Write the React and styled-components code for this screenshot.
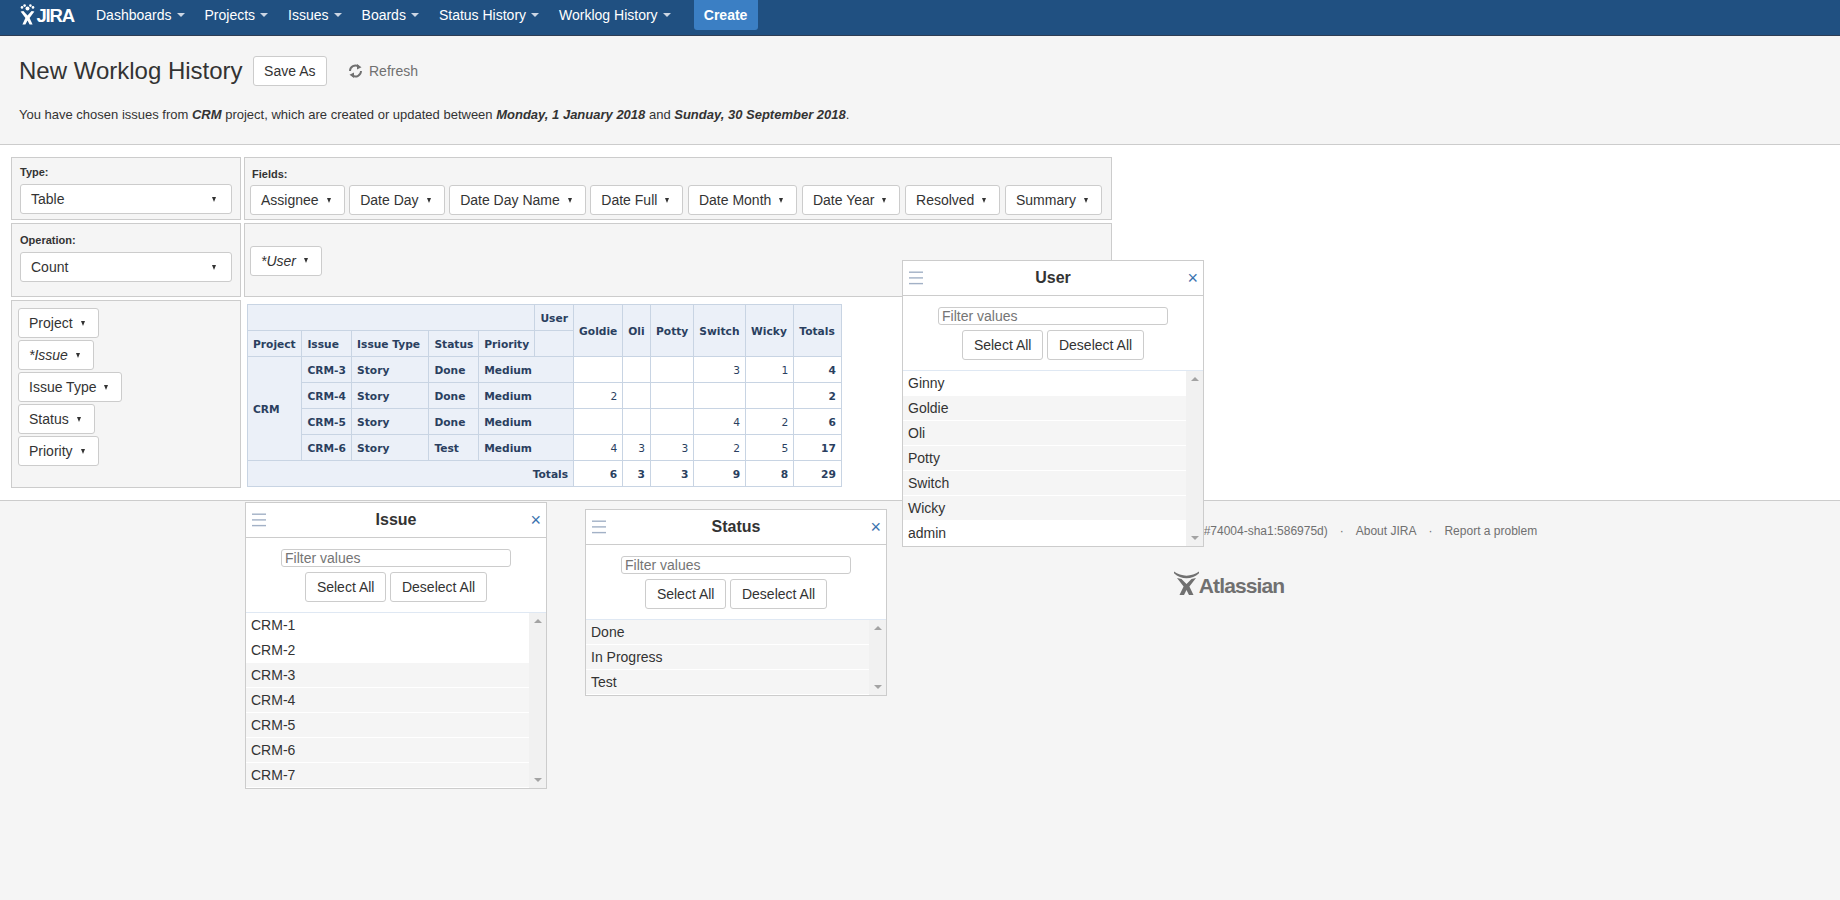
import React from "react";
import styled, { createGlobalStyle } from "styled-components";

const Global = createGlobalStyle`
  html, body { margin: 0; padding: 0; background: #fff; }
  * { box-sizing: border-box; }
  body { font-family: "Liberation Sans", Arial, sans-serif; font-size: 14px; color: #333; }
`;

const Page = styled.div`
  position: relative;
  display: flex;
  flex-direction: column;
  min-height: 100vh;
  overflow: hidden;
`;

const Header = styled.header`
  display: flex;
  align-items: flex-start;
  height: 36px;
  padding-left: 20px;
  background: #205081;
  border-bottom: 1px solid #2e3d54;
`;

const Logo = styled.div`
  display: flex;
  align-items: flex-start;
  width: 76px;
  height: 35px;
  color: #fff;
  svg { margin-top: 4px; flex: none; }
`;

const LogoText = styled.span`
  font-size: 18.5px;
  font-weight: 700;
  letter-spacing: -1.2px;
  line-height: 20px;
  margin: 6px 0 0 1.5px;
`;

const NavItem = styled.a`
  display: flex;
  align-items: center;
  height: 30px;
  padding-right: 20px;
  color: #fff;
  font-size: 14px;
`;

const NavCaret = styled.i`
  width: 0;
  height: 0;
  margin-left: 5px;
  border-left: 4px solid transparent;
  border-right: 4px solid transparent;
  border-top: 4px solid #ccd6e4;
`;

const Create = styled.button`
  width: 64px;
  height: 30px;
  margin-left: 3px;
  padding: 0;
  border: 0;
  border-radius: 0 0 3px 3px;
  background: #3b7fc4;
  color: #fff;
  font: 700 14px "Liberation Sans", Arial, sans-serif;
`;

const PageHeader = styled.section`
  height: 109px;
  padding: 20px 19px 0;
  background: #f5f5f5;
  border-bottom: 1px solid #ccc;
`;

const TitleRow = styled.div`
  display: flex;
  align-items: center;
  height: 30px;
`;

const Title = styled.h1`
  margin: 0 10px 0 0;
  font-size: 24px;
  font-weight: 400;
  color: #333;
`;

const Btn = styled.button`
  display: inline-flex;
  align-items: center;
  justify-content: center;
  flex: none;
  height: 30px;
  padding: 0 ${(p) => p.$right ?? 10.5}px 0 ${(p) => p.$left ?? 10.5}px;
  background: #fff;
  border: 1px solid #ccc;
  border-radius: 3px;
  color: #333;
  font: ${(p) => (p.$italic ? "italic " : "")}400 14px "Liberation Sans", Arial, sans-serif;
  white-space: nowrap;
`;

const FieldBtn = styled(Btn).attrs({ $left: 10, $right: 13 })``;

const Refresh = styled.a`
  display: flex;
  align-items: center;
  gap: 6px;
  margin-left: 21px;
  color: #707070;
  font-size: 14px;
`;

const Desc = styled.p`
  margin: 19px 0 0;
  font-size: 13px;
  line-height: 20px;
  color: #333;
`;

const Main = styled.main`
  padding: 12px 0 12px 11px;
  background: #fff;
`;

const UiGrid = styled.div`
  display: grid;
  grid-template-columns: 230px 868px;
  grid-template-rows: 63px 74px 188px;
  gap: 3px;
`;

const Cell = styled.div`
  display: flex;
  flex-direction: column;
  align-items: flex-start;
  background: #f5f5f5;
  border: 1px solid #ccc;
`;

const ConfigCell = styled(Cell)`
  padding: ${(p) => p.$top ?? 8}px 8px 0;
`;

const FieldsCell = styled(Cell)`
  padding: 10px 5px 0;
`;

const UserCell = styled(Cell)`
  justify-content: center;
  padding: 1px 5px 0;
`;

const RowsCell = styled(Cell)`
  gap: 2px;
  padding: 7px 6px 0;
`;

const TableCell = styled.div`
  padding: 4px 3px;
`;

const Label = styled.label`
  font-size: 11px;
  font-weight: 700;
  line-height: 13px;
  color: #333;
  margin-bottom: ${(p) => p.$gap || 5}px;
  padding-left: ${(p) => p.$inset || 0}px;
`;

const Select = styled.button`
  display: flex;
  align-items: center;
  justify-content: space-between;
  width: 212px;
  height: 30px;
  padding: 0 15px 0 10px;
  background: #fff;
  border: 1px solid #ccc;
  border-radius: 3px;
  color: #333;
  font: 400 14px "Liberation Sans", Arial, sans-serif;
`;

const Caret = styled.i`
  flex: none;
  width: 0;
  height: 0;
  margin-left: 8px;
  border-left: 2.5px solid transparent;
  border-right: 2.5px solid transparent;
  border-top: 5px solid #333;
`;

const FieldRow = styled.div`
  display: flex;
  gap: 4.6px;
`;

const Pivot = styled.table`
  width: 594px;
  table-layout: fixed;
  border-collapse: collapse;
  font-family: "DejaVu Sans", Verdana, sans-serif;
  font-size: 8pt;
  color: #2a3f5f;
  tr { height: 26px; }
`;

const Th = styled.th`
  padding: 1px 5px 0;
  background: #ebf0f8;
  border: 1px solid #c8d4e3;
  font-weight: 700;
  text-align: ${(p) => p.$align || "left"};
  vertical-align: middle;
  white-space: nowrap;
  color: #2a3f5f;
`;

const Td = styled.td`
  padding: 1px 5px 0;
  background: #fff;
  border: 1px solid #c8d4e3;
  text-align: right;
  vertical-align: middle;
  font-weight: ${(p) => (p.$total ? 700 : 400)};
`;

const Footer = styled.footer`
  flex: 1;
  display: flex;
  flex-direction: column;
  align-items: center;
  padding: 22px 0 0 612px;
  background: #f5f5f5;
  border-top: 1px solid #ccc;
`;

const FooterLinks = styled.div`
  display: flex;
  gap: 12px;
  font-size: 12px;
  line-height: 16px;
  color: #707070;
  white-space: nowrap;
`;

const FooterLogo = styled.div`
  display: flex;
  align-items: flex-end;
  margin: 32px 0 0 6px;
  color: #707070;
`;

const FooterLogoText = styled.span`
  font-size: 21px;
  font-weight: 700;
  line-height: 18px;
  letter-spacing: -0.9px;
`;

const FilterBox = styled.div`
  position: absolute;
  top: ${(p) => p.$top}px;
  left: ${(p) => p.$left}px;
  width: 302px;
  background: #fff;
  border: 1px solid #ccc;
  z-index: 10;
`;

const BoxHead = styled.div`
  position: relative;
  display: flex;
  align-items: center;
  justify-content: center;
  height: 35px;
  border-bottom: 1px solid #ccc;
`;

const BoxTitle = styled.h4`
  margin: 0;
  font-size: 16px;
  font-weight: 700;
  color: #333;
`;

const Drag = styled.span`
  position: absolute;
  left: 6px;
  top: 10px;
  display: flex;
`;

const CloseX = styled.a`
  position: absolute;
  right: 5px;
  top: 6px;
  color: #3b73af;
  font-size: 18px;
  line-height: 22px;
`;

const BoxBody = styled.div`
  display: flex;
  flex-direction: column;
  align-items: center;
  gap: 5px;
  padding: 11px 0 10px;
`;

const Search = styled.input`
  width: 230px;
  height: 18px;
  padding: 0 3px;
  border: 1px solid #ccc;
  border-radius: 3px;
  font: 400 14px "Liberation Sans", Arial, sans-serif;
  &::placeholder { color: #757575; opacity: 1; }
`;

const BtnRow = styled.div`
  display: flex;
  gap: 4.5px;
`;

const ListWrap = styled.div`
  display: flex;
  border-top: 1px solid #dfe8f3;
`;

const List = styled.div`
  flex: 1;
`;

const Item = styled.div`
  height: 24px;
  margin-bottom: 1px;
  padding-left: 5px;
  line-height: 24px;
  font-size: 14px;
  color: #333;
  background: ${(p) => (p.$selected ? "#f5f5f5" : "#fff")};
`;

const Rail = styled.div`
  display: flex;
  flex-direction: column;
  justify-content: space-between;
  align-items: center;
  flex: none;
  width: 17px;
  padding: 6px 0;
  background: #f1f1f1;
`;

const Arrow = styled.i`
  width: 0;
  height: 0;
  border-left: 4px solid transparent;
  border-right: 4px solid transparent;
  ${(p) => (p.$down ? "border-top" : "border-bottom")}: 4px solid #a3a3a3;
`;

const JiraMark = () => (
  <svg width="15" height="21" viewBox="0 0 15 21" fill="#fff">
    <circle cx="2" cy="3.4" r="1.3" />
    <circle cx="4.6" cy="1.6" r="1.3" />
    <circle cx="7.5" cy="4.4" r="2" />
    <circle cx="10.4" cy="1.6" r="1.3" />
    <circle cx="13" cy="3.4" r="1.3" />
    <path d="M0.6 7.5 L3.4 7 L7.5 11.4 L11.6 7 L14.4 7.5 L9.6 14 L12.6 20.6 L9.6 20.6 L7.5 16.4 L5.4 20.6 L2.4 20.6 L5.4 14 Z" />
  </svg>
);

const AtlassianMark = () => (
  <svg width="25" height="24" viewBox="0 0 25 24" fill="#707070">
    <path d="M0 0.5 C7 6 18 6 25 0.5 L25 2.2 C18 9 7 9 0 2.2 Z" />
    <path d="M3 7 L7.5 8 L12.5 13 L17.5 8 L22 7 L15.4 15.6 L19.5 24 L15 24 L12.5 19 L10 24 L5.5 24 L9.6 15.6 Z" />
  </svg>
);

const RefreshIcon = () => (
  <svg width="15" height="16" viewBox="0 0 15 16" fill="none" stroke="#707070" strokeWidth="1.9">
    <path d="M2 8 A5.5 5.5 0 0 1 10.5 3.4" />
    <path d="M13 8 A5.5 5.5 0 0 1 4.5 12.6" />
    <path d="M9 1 L13.5 4.2 L9 6.5 Z" fill="#707070" stroke="none" />
    <path d="M6 15 L1.5 11.8 L6 9.5 Z" fill="#707070" stroke="none" />
  </svg>
);

const DragIcon = () => (
  <svg width="14" height="14" viewBox="0 0 14 14" fill="#a2b1c6">
    <rect y="0.5" width="14" height="1.4" />
    <rect y="6.2" width="14" height="1.4" />
    <rect y="11.9" width="14" height="1.4" />
  </svg>
);

const NAV = ["Dashboards", "Projects", "Issues", "Boards", "Status History", "Worklog History"];
const FIELDS = ["Assignee", "Date Day", "Date Day Name", "Date Full", "Date Month", "Date Year", "Resolved", "Summary"];
const ROW_FIELDS = [["Project"], ["*Issue", true], ["Issue Type"], ["Status"], ["Priority"]];
const COLS = [54.4, 49.7, 77.3, 49.8, 56.2, 38.7, 49.1, 27.8, 43.3, 51.8, 48.2, 47.6];
const USERS = ["Goldie", "Oli", "Potty", "Switch", "Wicky", "Totals"];
const ROWS = [
  ["CRM-3", "Done", ["", "", "", 3, 1], 4],
  ["CRM-4", "Done", [2, "", "", "", ""], 2],
  ["CRM-5", "Done", ["", "", "", 4, 2], 6],
  ["CRM-6", "Test", [4, 3, 3, 2, 5], 17],
];
const GRAND = [6, 3, 3, 9, 8, 29];

const Box = ({ top, left, title, items, unselected }) => (
  <FilterBox $top={top} $left={left}>
    <BoxHead>
      <Drag><DragIcon /></Drag>
      <BoxTitle>{title}</BoxTitle>
      <CloseX>×</CloseX>
    </BoxHead>
    <BoxBody>
      <Search placeholder="Filter values" />
      <BtnRow>
        <Btn>Select All</Btn>
        <Btn>Deselect All</Btn>
      </BtnRow>
    </BoxBody>
    <ListWrap>
      <List>
        {items.map((it) => (
          <Item key={it} $selected={!unselected.includes(it)}>{it}</Item>
        ))}
      </List>
      <Rail>
        <Arrow />
        <Arrow $down />
      </Rail>
    </ListWrap>
  </FilterBox>
);

export default function App() {
  return (
    <Page>
      <Global />
      <Header>
        <Logo>
          <JiraMark />
          <LogoText>JIRA</LogoText>
        </Logo>
        {NAV.map((n) => (
          <NavItem key={n}>{n}<NavCaret /></NavItem>
        ))}
        <Create>Create</Create>
      </Header>

      <PageHeader>
        <TitleRow>
          <Title>New Worklog History</Title>
          <Btn>Save As</Btn>
          <Refresh><RefreshIcon />Refresh</Refresh>
        </TitleRow>
        <Desc>
          You have chosen issues from <b><i>CRM</i></b> project, which are created or updated between{" "}
          <b><i>Monday, 1 January 2018</i></b> and <b><i>Sunday, 30 September 2018</i></b>.
        </Desc>
      </PageHeader>

      <Main>
        <UiGrid>
          <ConfigCell>
            <Label>Type:</Label>
            <Select>Table<Caret /></Select>
          </ConfigCell>
          <FieldsCell>
            <Label $inset={2} $gap={4}>Fields:</Label>
            <FieldRow>
              {FIELDS.map((f) => (
                <FieldBtn key={f}>{f}<Caret /></FieldBtn>
              ))}
            </FieldRow>
          </FieldsCell>
          <ConfigCell $top={10}>
            <Label>Operation:</Label>
            <Select>Count<Caret /></Select>
          </ConfigCell>
          <UserCell>
            <FieldBtn $italic>*User<Caret /></FieldBtn>
          </UserCell>
          <RowsCell>
            {ROW_FIELDS.map(([f, it]) => (
              <FieldBtn key={f} $italic={it}>{f}<Caret /></FieldBtn>
            ))}
          </RowsCell>
          <TableCell>
            <Pivot>
              <colgroup>
                {COLS.map((c, i) => <col key={i} style={{ width: c }} />)}
              </colgroup>
              <thead>
                <tr>
                  <Th colSpan={5} />
                  <Th>User</Th>
                  {USERS.map((u) => <Th key={u} rowSpan={2}>{u}</Th>)}
                </tr>
                <tr>
                  <Th>Project</Th>
                  <Th>Issue</Th>
                  <Th>Issue Type</Th>
                  <Th>Status</Th>
                  <Th>Priority</Th>
                  <Th />
                </tr>
              </thead>
              <tbody>
                {ROWS.map(([key, status, vals, total], i) => (
                  <tr key={key}>
                    {i === 0 && <Th rowSpan={4}>CRM</Th>}
                    <Th>{key}</Th>
                    <Th>Story</Th>
                    <Th>{status}</Th>
                    <Th colSpan={2}>Medium</Th>
                    {vals.map((v, j) => <Td key={j}>{v}</Td>)}
                    <Td $total>{total}</Td>
                  </tr>
                ))}
                <tr>
                  <Th colSpan={6} $align="right">Totals</Th>
                  {GRAND.map((g, i) => <Td key={i} $total>{g}</Td>)}
                </tr>
              </tbody>
            </Pivot>
          </TableCell>
        </UiGrid>
      </Main>

      <Footer>
        <FooterLinks>
          <span>Atlassian JIRA Project Management Software (v7.12.0#74004-sha1:586975d)</span>
          <span>·</span>
          <span>About JIRA</span>
          <span>·</span>
          <span>Report a problem</span>
        </FooterLinks>
        <FooterLogo>
          <AtlassianMark />
          <FooterLogoText>Atlassian</FooterLogoText>
        </FooterLogo>
      </Footer>

      <Box top={260} left={902} title="User"
        items={["Ginny", "Goldie", "Oli", "Potty", "Switch", "Wicky", "admin"]}
        unselected={["Ginny", "admin"]} />
      <Box top={502} left={245} title="Issue"
        items={["CRM-1", "CRM-2", "CRM-3", "CRM-4", "CRM-5", "CRM-6", "CRM-7"]}
        unselected={["CRM-1", "CRM-2"]} />
      <Box top={509} left={585} title="Status"
        items={["Done", "In Progress", "Test"]}
        unselected={[]} />
    </Page>
  );
}
